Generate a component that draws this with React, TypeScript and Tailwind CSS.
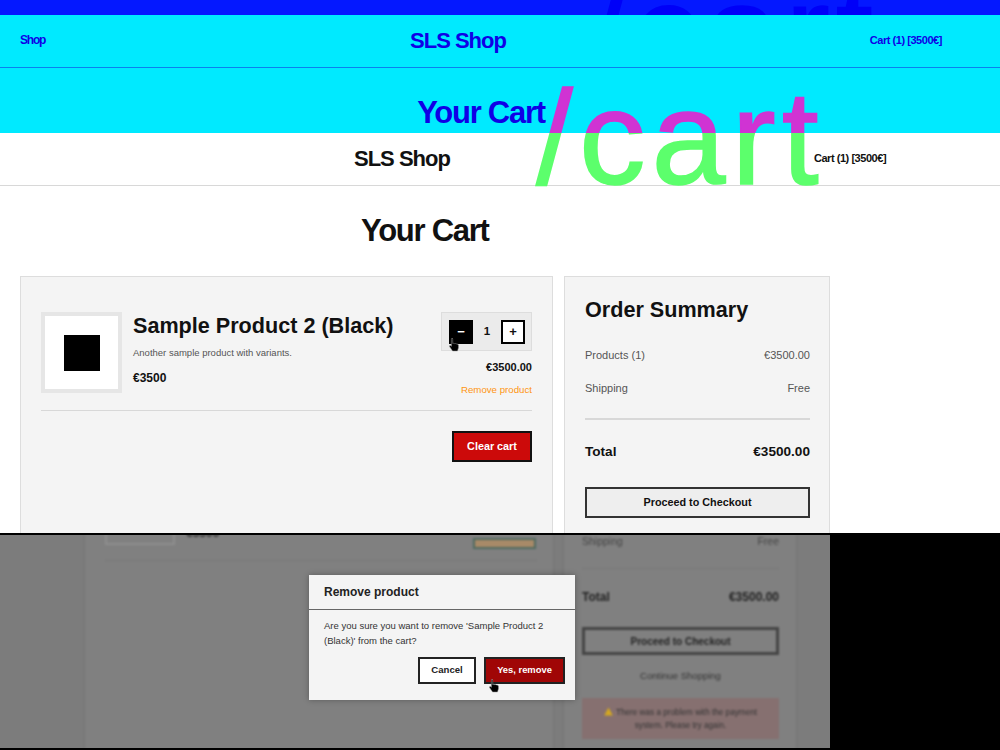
import React from "react";

const Cursor = () => (
  <svg width="11" height="14" viewBox="0 0 11 14" className="block">
    <path d="M2.6 0.4c.7 0 1.1.5 1.1 1.1v4l.9-.2.9.3.9-.1.9.4.9.1c.8.2 1.3.8 1.3 1.6v2.2l-1 3.2H3.6L0.5 8.6c-.3-.6.4-1.3 1-1l.9.7V1.5c0-.6.5-1.1 1.2-1.1z" fill="#000" stroke="#999" strokeWidth="0.5" />
  </svg>
);

const Big = ({ className }: { className: string }) => (
  <span className={"absolute leading-none whitespace-nowrap text-[133px] tracking-[6px] [-webkit-text-stroke:1.5px] " + className}>/cart</span>
);

export default function App() {
  return (
    <div className="w-[1000px] h-[750px] overflow-hidden flex flex-col font-['Liberation_Sans',Arial,sans-serif] bg-white">
      {/* top strip */}
      <div className="relative h-[15px] bg-[#0418ff] overflow-hidden shrink-0">
        <Big className="left-[590px] top-[-34px] text-[#0000f8]" />
      </div>
      {/* cyan header */}
      <div className="relative h-[118px] bg-[#00eaff] overflow-hidden shrink-0 text-[#1000e6]">
        <div className="h-[53px] flex items-center justify-between pl-[20px] pr-[58px] pb-[2px] border-b border-[#0a80ee]">
          <span className="text-[12px] font-bold tracking-[-1.2px]">Shop</span>
          <span className="text-[22px] font-bold tracking-[-1px] ml-[1px]">SLS Shop</span>
          <span className="text-[11px] font-bold tracking-[-0.45px]">Cart (1) [3500€]</span>
        </div>
        <h1 className="text-[31px] font-bold tracking-[-1.25px] text-center mt-[27px] ml-[-38px] leading-[36px]">Your Cart</h1>
        <Big className="left-[536px] top-[57px] text-[#d033d3]" />
      </div>
      {/* white page */}
      <div className="relative h-[400px] overflow-hidden shrink-0 bg-white text-[#111]">
        <div className="h-[53px] relative border-b border-[#d8d8d8] flex items-center pb-[2px]">
          <span className="ml-[354px] text-[22px] font-bold tracking-[-1px]">SLS Shop</span>
          <span className="ml-[364px] text-[11px] font-bold tracking-[-0.45px]">Cart (1) [3500€]</span>
        </div>
        <h1 className="text-[31px] font-bold tracking-[-1.25px] mt-[27px] ml-[361px] leading-[36px]">Your Cart</h1>
        <div className="mt-[27px] ml-[20px] flex gap-[11px] items-start">
          <div className="w-[533px] h-[300px] bg-[#f4f4f4] border border-[#dddddd] px-[20px] pt-[35px]">
            <div className="flex justify-between border-b border-[#d8d8d8] pb-[14px] h-[84px] box-content">
              <div className="flex gap-[11px]">
                <div className="w-[81px] h-[81px] border-[4px] border-[#e6e6e6] bg-white flex items-center justify-center">
                  <div className="w-[36px] h-[36px] bg-black" />
                </div>
                <div className="pt-px">
                  <div className="text-[21.6px] font-bold leading-[26px]">Sample Product 2 (Black)</div>
                  <div className="text-[9.5px] text-[#555] mt-[7px] leading-[14px]">Another sample product with variants.</div>
                  <div className="text-[12px] font-bold mt-[10px] leading-[16px]">€3500</div>
                </div>
              </div>
              <div className="flex flex-col items-end">
                <div className="relative shrink-0 w-[91px] h-[39px] bg-[#ebebeb] border border-[#dddddd] flex items-center pl-[7px]">
                  <div className="w-[24px] h-[24px] bg-black text-white text-[13px] font-bold flex items-center justify-center">−</div>
                  <span className="w-[28px] text-center text-[11.5px] font-bold">1</span>
                  <div className="w-[24px] h-[24px] bg-white border-2 border-black text-[13px] font-bold flex items-center justify-center">+</div>
                  <div className="absolute left-[7px] top-[25px]"><Cursor /></div>
                </div>
                <div className="shrink-0 text-[11px] font-bold mt-[9px] leading-[14px]">€3500.00</div>
                <div className="shrink-0 text-[9.7px] text-[#ff9410] mt-[9px] leading-[14px]">Remove product</div>
              </div>
            </div>
            <div className="flex justify-end mt-[20px]">
              <div className="w-[80px] h-[31px] bg-[#cc0a0a] border-2 border-[#111] text-white text-[10.8px] font-bold flex items-center justify-center">Clear cart</div>
            </div>
          </div>
          <div className="w-[266px] h-[300px] bg-[#f4f4f4] border border-[#dddddd] pl-[20px] pr-[19px] pt-[20px]">
            <div className="text-[21.6px] font-bold leading-[26px]">Order Summary</div>
            <div className="flex justify-between text-[11px] text-[#555] mt-[25px] leading-[14px]"><span>Products (1)</span><span>€3500.00</span></div>
            <div className="flex justify-between text-[11px] text-[#555] mt-[19px] leading-[14px]"><span>Shipping</span><span>Free</span></div>
            <div className="border-t-2 border-[#d8d8d8] mt-[23px]" />
            <div className="flex justify-between text-[13.6px] font-bold mt-[23px] leading-[18px]"><span>Total</span><span>€3500.00</span></div>
            <div className="mt-[26px] h-[31px] bg-[#eeeeee] border-2 border-[#333] text-[10.8px] font-bold flex items-center justify-center">Proceed to Checkout</div>
          </div>
        </div>
        <Big className="left-[536px] top-[-61px] text-[#5cff6c]" />
      </div>
      {/* dimmed page with modal */}
      <div className="relative h-[217px] shrink-0 bg-black border-y-2 border-black overflow-hidden">
        <div className="relative w-[830px] h-full bg-[#7c7c7c] overflow-hidden">
          <div className="absolute inset-0 blur-[0.8px] text-[#333]">
            <div className="absolute left-[84px] top-[-60px] w-[470px] h-[300px] border-x border-[#767676] bg-[#808080]" />
            <div className="absolute left-[563px] top-[-60px] w-[234px] h-[300px] border-x border-[#767676] bg-[#808080]" />
            <div className="absolute left-[105px] top-[-20px] w-[70px] h-[30px] border-2 border-[#8e8e8e]" />
            <div className="absolute left-[186px] top-[-11px] text-[12px] font-bold">€3500</div>
            <div className="absolute left-[473px] top-[3px] w-[63px] h-[11px] bg-[#a88a68] border-2 border-[#506a60]" />
            <div className="absolute left-[105px] top-[25px] w-[432px] border-t border-[#777]" />
            <div className="absolute left-[582px] top-[-1px] w-[197px] flex justify-between text-[10.5px] text-[#444]"><span>Shipping</span><span>Free</span></div>
            <div className="absolute left-[582px] top-[33px] w-[197px] border-t border-[#777]" />
            <div className="absolute left-[582px] top-[53px] w-[197px] flex justify-between text-[12px] font-bold text-[#222]"><span>Total</span><span>€3500.00</span></div>
            <div className="absolute left-[582px] top-[92px] w-[197px] h-[28px] border-[3px] border-[#444] text-[10px] font-bold text-[#222] flex items-center justify-center">Proceed to Checkout</div>
            <div className="absolute left-[582px] top-[134px] w-[197px] text-center text-[9.5px] text-[#333]">Continue Shopping</div>
            <div className="absolute left-[582px] top-[163px] w-[197px] h-[41px] bg-[#867070] text-[8.2px] text-[#333] text-center leading-[13px] pt-[8px]">
              <svg width="9" height="9" viewBox="0 0 10 10" className="inline-block align-[-1px] mr-[3px]"><path d="M5 0.5L9.8 9.5H0.2z" fill="#d4a820" /></svg>
              There was a problem with the payment<br />system. Please try again.
            </div>
          </div>
          <div className="absolute left-[309px] top-[40px] w-[266px] h-[125px] bg-[#f4f4f4] shadow-[0_0_6px_rgba(0,0,0,0.3)] text-[#222]">
            <div className="h-[35px] border-b border-[#666] px-[15px] text-[12px] font-bold flex items-center">Remove product</div>
            <div className="px-[15px] pt-[9px] text-[9.5px] leading-[14.5px] text-[#333]">Are you sure you want to remove 'Sample Product 2 (Black)' from the cart?</div>
            <div className="flex justify-end gap-[8px] mt-[9px] pr-[10px]">
              <div className="w-[58px] h-[27px] bg-white border-2 border-[#222] text-[9.6px] font-bold flex items-center justify-center">Cancel</div>
              <div className="relative w-[81px] h-[27px] bg-[#a00606] border-2 border-[#222] text-white text-[9.4px] font-bold flex items-center justify-center">Yes, remove
                <div className="absolute left-[3px] top-[20px]"><Cursor /></div>
              </div>
            </div>
          </div>
        </div>
      </div>
    </div>
  );
}
